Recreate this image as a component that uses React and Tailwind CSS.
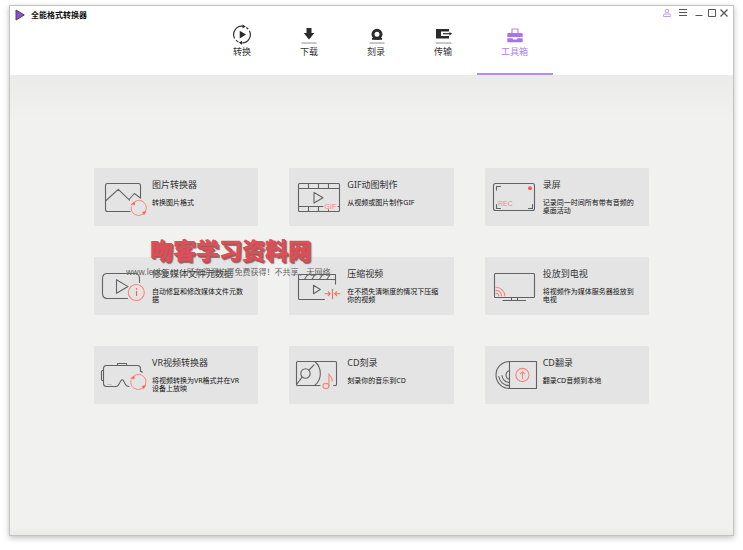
import { useState } from "react";

const INK = "#626264";
const RED = "#fb8579";

function IconBox({ children }) {
  return (
    <svg
      viewBox="0 0 58 58"
      className="h-[58px] w-[58px] shrink-0"
      fill="none"
      stroke={INK}
      strokeWidth="1.1"
      strokeLinecap="round"
      strokeLinejoin="round"
      aria-hidden="true"
    >
      {children}
    </svg>
  );
}

// Two half arcs with arrow heads, drawn round (cx, cy)
function Refresh({ cx, cy }) {
  return (
    <g transform={`translate(${cx} ${cy})`} stroke={RED} strokeWidth="1">
      <path d="M-7.4 -1.2A7.5 7.5 0 0 0 4 6.4" />
      <path d="M-3.5 -6.7A7.5 7.5 0 0 1 6.8 3.2" />
      <path d="M-7.4 -3.6L-4 -6.2L-4.2 -3.4Z" fill="#f8604f" stroke="#f8604f" strokeWidth="0.6" />
      <path d="M4 4.2L7.4 3.4L5.4 6.4Z" fill="#f8604f" stroke="#f8604f" strokeWidth="0.6" />
    </g>
  );
}

function PictureIcon() {
  return (
    <IconBox>
      <path d="M36 43.5H13.5Q11.5 43.5 11.5 41.5V17.5Q11.5 15.5 13.5 15.5H44.5Q46.5 15.5 46.5 17.5V30" />
      <path d="M11.5 33L24.3 21.3L35.5 32.2M35 31.5L40.3 25.5L46.5 30" />
      <Refresh cx={44.7} cy={40} />
    </IconBox>
  );
}

function GifIcon() {
  return (
    <IconBox>
      <path d="M34 43.5H10.5Q9.5 43.5 9.5 42.5V16.5Q9.5 15.5 10.5 15.5H49.5Q50.5 15.5 50.5 16.5V42.5Q50.5 43.5 49.5 43.5H34" />
      <path d="M9.5 20.5H50.5M9.5 38.5H34M49 38.5H50.5M19.5 15.5V20.5M29.5 15.5V20.5M39.5 15.5V20.5M19.5 38.5V43.5M29.5 38.5V43.5M39.5 41.8V43.5" />
      <path d="M25 24.5V35L34 29.7Z" />
      <text x="35.5" y="40.5" fontSize="7" fill={RED} stroke="none" className="font-['Liberation_Sans',sans-serif]">
        GIF
      </text>
    </IconBox>
  );
}

function RecordIcon() {
  return (
    <IconBox>
      <rect x="8.5" y="15.5" width="41" height="27" rx="2" />
      <path d="M11.5 22V18.5H15.5M11.5 36.5V40.5H15.5M47.5 36.5V40.5H43.5" />
      <circle cx="45" cy="20.3" r="2" fill="#fb5b4b" stroke="none" />
      <text x="13" y="38" fontSize="7" fill={RED} stroke="none" className="font-['Liberation_Sans',sans-serif]">
        REC
      </text>
    </IconBox>
  );
}

function RepairIcon() {
  return (
    <IconBox>
      <path d="M33.5 41.5H13.5Q8.5 41.5 8.5 36.5V21.5Q8.5 16.5 13.5 16.5H41Q45.5 16.5 45.5 21.5V25.5" />
      <path d="M22.5 22.7V36.3L34 29.6Z" />
      <circle cx="42.3" cy="35.5" r="8" stroke={RED} />
      <path d="M42.5 34.5V38.5" stroke="#fb5b4b" />
      <path d="M42.5 31.8V32" stroke="#fb5b4b" strokeWidth="1.4" />
    </IconBox>
  );
}

function CompressIcon() {
  return (
    <IconBox>
      <path d="M35.5 42.5H10.5Q9.5 42.5 9.5 41.5V17.5H46.5V27M9.5 22.5H46.5" />
      <path d="M15.5 22.3L18.5 17.7M23 22.3L26 17.7M30.5 22.3L33.5 17.7M38 22.3L41 17.7" />
      <path d="M24.5 28.3V36.7L31.3 32.5Z" />
      <g stroke="#fb6a5c">
        <path d="M43.5 32.3V41.7" />
        <path d="M36 36.7H41M39.3 34.8L41.2 36.7L39.3 38.6M51 36.7H46M47.7 34.8L45.8 36.7L47.7 38.6" />
      </g>
    </IconBox>
  );
}

function TvIcon() {
  return (
    <IconBox>
      <rect x="9.5" y="16.5" width="40" height="24" rx="1" />
      <path d="M26.5 40.5V43.5M32.5 40.5V43.5M18 43.5H40.5" />
      <path
        d="M11 36.2A3 3 0 0 1 13.8 39M11 33.4A5.6 5.6 0 0 1 16.6 39M11 30.2A8.8 8.8 0 0 1 19.8 39"
        stroke={RED}
      />
    </IconBox>
  );
}

function VrIcon() {
  return (
    <IconBox>
      <path d="M48 26.5V25.5H46.5V22.5Q46.5 19.5 43.5 19.5H12.5Q9.5 19.5 9.5 22.5V37.5Q9.5 40.5 12.5 40.5H22Q23.8 40.5 24.6 38.8L27 34.6Q28.2 33 29.4 34.6L31.6 38.8Q32.5 40.5 35 40.5" />
      <path d="M9.5 24.5H8.5Q7.5 24.5 7.5 25.5V33.5Q7.5 34.5 8.5 34.5H9.5M23.5 19.5V17.5H32.5V19.5" />
      <path d="M14 38.5H17" stroke="#bdbdbd" />
      <Refresh cx={44.3} cy={36} />
    </IconBox>
  );
}

function BurnIcon() {
  return (
    <IconBox>
      <path d="M31 39.5H8.5Q7.5 39.5 7.5 38.5V16.5Q7.5 15.5 8.5 15.5H46.5Q47.5 15.5 47.5 16.5V38.5Q47.5 39.5 46.5 39.5H44.5" />
      <circle cx="16.5" cy="27.5" r="4.7" />
      <path d="M25.7 15.5C33.2 21.5 33.2 33.5 25.7 39.5M20 24L25 18.8M13 31.2L8 38" />
      <g stroke={RED}>
        <ellipse cx="36.9" cy="40" rx="3" ry="2.6" />
        <path d="M39.9 40V27.5C40.2 30.5 44.5 31 43 35.3" />
      </g>
    </IconBox>
  );
}

function RipIcon() {
  return (
    <IconBox>
      <path d="M24.5 15.5H51.5V42.5H24.5ZM24.5 15.5A13.5 13.5 0 0 0 24.5 42.5" />
      <path d="M24.5 24.7A4.4 4.4 0 0 0 24.5 33.3M17 29.5A7.5 7.5 0 0 0 24.5 36.5M13.7 30.5A10.8 10.8 0 0 0 24.5 39.6" />
      <g stroke={RED}>
        <circle cx="37.4" cy="29" r="6.6" />
        <path d="M37.5 32.5V25.8M35.3 27.8L37.5 25.6L39.7 27.8" />
      </g>
    </IconBox>
  );
}

function NavSvg({ children }) {
  return (
    <svg viewBox="0 0 24 24" className="h-6 w-6" fill="none" aria-hidden="true">
      {children}
    </svg>
  );
}

function ConvertNav() {
  return (
    <NavSvg>
      <g stroke="#333" strokeWidth="1.2">
        <path d="M13 4.3A8.3 8.3 0 0 0 4.6 16.4M6 18.2A8.3 8.3 0 0 0 8.4 20" />
        <path d="M16.3 5.4A8.3 8.3 0 0 1 18.2 7M19.4 8.8A8.3 8.3 0 0 1 11 20.9" />
      </g>
      <path d="M12.5 2.4L15.8 4.5L12.6 6.2ZM12 18.8L8.8 20.8L12 22.8ZM9.7 8.8V16.4L16 12.6Z" fill="#2b2b2b" />
    </NavSvg>
  );
}

function DownloadNav() {
  return (
    <NavSvg>
      <path d="M9.5 6H14.5V11H17.3L12 17.4L6.7 11H9.5Z" fill="#2b2b2b" />
      <path d="M4.5 21H19.5" stroke="#a3a3a3" strokeWidth="1.2" />
    </NavSvg>
  );
}

function BurnNav() {
  return (
    <NavSvg>
      <circle cx="13" cy="12.3" r="4" stroke="#2b2b2b" strokeWidth="3" />
      <path d="M8 16H18V17.8H8Z" fill="#2b2b2b" />
      <path d="M5.5 21H20.5" stroke="#a3a3a3" strokeWidth="1.2" />
    </NavSvg>
  );
}

function TransferNav() {
  return (
    <NavSvg>
      <path d="M5 7H18V9.4H10V14H18V16.5H5Z" fill="#2b2b2b" />
      <path d="M12 11.7H20" stroke="#2b2b2b" strokeWidth="1.2" />
      <path d="M18.5 9.9L21.2 11.7L18.5 13.5Z" fill="#2b2b2b" />
      <path d="M4.5 21H20.5" stroke="#a3a3a3" strokeWidth="1.2" />
    </NavSvg>
  );
}

function ToolboxNav() {
  return (
    <NavSvg>
      <path d="M9 11V7H15V11" stroke="#b58af0" strokeWidth="1.2" />
      <path d="M5.3 11H18.7Q19.7 11 19.7 12V15H4.3V12Q4.3 11 5.3 11Z" fill="#a774ec" />
      <path d="M4.3 16.2H9.8V17.6H14.2V16.2H19.7V19.4Q19.7 20.2 18.9 20.2H5.1Q4.3 20.2 4.3 19.4Z" fill="#a774ec" />
    </NavSvg>
  );
}

const tabs = [
  { label: "转换", Icon: ConvertNav },
  { label: "下载", Icon: DownloadNav },
  { label: "刻录", Icon: BurnNav },
  { label: "传输", Icon: TransferNav },
  { label: "工具箱", Icon: ToolboxNav },
];

const tools = [
  { title: "图片转换器", text: "转换图片格式", Icon: PictureIcon },
  { title: "GIF动图制作", text: "从视频或图片制作GIF", Icon: GifIcon },
  { title: "录屏", text: "记录同一时间所有带有音频的桌面活动", Icon: RecordIcon },
  { title: "修复媒体文件元数据", text: "自动修复和修改媒体文件元数据", Icon: RepairIcon },
  { title: "压缩视频", text: "在不损失清晰度的情况下压缩你的视频", Icon: CompressIcon },
  { title: "投放到电视", text: "将视频作为媒体服务器投放到电视", Icon: TvIcon },
  { title: "VR视频转换器", text: "将视频转换为VR格式并在VR设备上放映", Icon: VrIcon },
  { title: "CD刻录", text: "刻录你的音乐到CD", Icon: BurnIcon },
  { title: "CD翻录", text: "翻录CD音频到本地", Icon: RipIcon },
];

function TitleBar() {
  return (
    <div className="flex h-4 items-start justify-between pr-1 pl-[5px]">
      <div className="flex items-center gap-[6px] pt-[3px]">
        <svg viewBox="0 0 10 12" className="h-3 w-[10px]" aria-hidden="true">
          <path d="M1 1L9.3 6L1 11Z" fill="#8a4fd6" stroke="#4b4453" strokeWidth="1" strokeLinejoin="round" />
        </svg>
        <h1 className="text-[8px] leading-[12px] font-bold text-[#111]">全能格式转换器</h1>
      </div>
      <div className="flex items-center gap-[2px] pt-[2px] text-[#555]">
        <div className="mr-[1px] flex items-center gap-[6px]">
          <button type="button" aria-label="账户">
            <svg viewBox="0 0 10 10" className="block h-[10px] w-[10px]" fill="none" stroke="#c09cf0">
              <circle cx="5" cy="3" r="1.8" />
              <path d="M1.5 8.5V7.2Q1.5 6 3 6H7Q8.5 6 8.5 7.2V8.5Z" />
            </svg>
          </button>
          <button type="button" aria-label="菜单">
            <svg viewBox="0 0 10 10" className="block h-[10px] w-[10px]" stroke="currentColor">
              <path d="M1 1.5H9M1 4.5H9M1 7.5H9" />
            </svg>
          </button>
          <button type="button" aria-label="最小化">
            <svg viewBox="0 0 10 10" className="block h-[10px] w-[10px]" stroke="currentColor">
              <path d="M1.5 7.5H8.5" />
            </svg>
          </button>
        </div>
        <button type="button" aria-label="最大化">
          <svg viewBox="0 0 10 10" className="block h-[10px] w-[10px]" fill="none" stroke="currentColor">
            <path d="M1.5 1.5H8.5V8.5H1.5Z" />
          </svg>
        </button>
        <button type="button" aria-label="关闭">
          <svg viewBox="0 0 10 10" className="block h-[10px] w-[10px]" stroke="currentColor" strokeWidth="1.3">
            <path d="M1.5 1.5L8.5 8.5M8.5 1.5L1.5 8.5" />
          </svg>
        </button>
      </div>
    </div>
  );
}

function ToolCard({ title, text, Icon }) {
  return (
    <button type="button" className="flex min-h-[58px] items-start rounded-[1px] bg-[#e4e4e4] text-left">
      <Icon />
      <span className="block flex-1 pt-[11px] pr-[14px]">
        <span className="block text-[9px] leading-[12px] whitespace-nowrap text-[#333]">{title}</span>
        <span className="mt-2 block text-[7px] leading-[8px] text-[#111]">{text}</span>
      </span>
    </button>
  );
}

export default function App() {
  const [active, setActive] = useState("工具箱");

  return (
    <div className="flex min-h-screen bg-white px-[9px] pt-[5px] pb-[14px] font-['Noto_Sans','Noto_Sans_CJK_SC',sans-serif]">
      <div className="flex flex-1 flex-col border border-[#c3c3c3] bg-white shadow-[0_2px_6px_rgba(0,0,0,0.25)]">
        <header>
          <TitleBar />
          <nav className="flex justify-center pl-[18px]">
            {tabs.map(({ label, Icon }) => (
              <button
                key={label}
                type="button"
                onClick={() => setActive(label)}
                className={`flex h-[53px] flex-col items-center border-b-2 ${
                  active === label
                    ? "w-[76px] border-[#b78af5] text-[#b083f0]"
                    : "w-[67px] border-transparent text-[#333]"
                }`}
              >
                <Icon />
                <span className="text-[9px] leading-[12px]">{label}</span>
              </button>
            ))}
          </nav>
        </header>

        <main className="flex-1 bg-[#f1f1ef] bg-linear-to-b from-[#ebebea] to-[#f1f1ef] to-10% px-[84px] pt-[93px] pb-10 shadow-[inset_0_-8px_6px_-6px_#e6e6e5]">
          <div className="relative grid grid-cols-3 gap-[31px]">
            {tools.map((tool) => (
              <ToolCard key={tool.title} {...tool} />
            ))}

            {/* Watermark laid over the cards */}
            <div className="pointer-events-none absolute top-[65px] left-[32px] whitespace-nowrap">
              <p className="ml-[24px] text-[23px] leading-[34px] font-black text-[#dc4f58] [text-shadow:1px_1px_0_#a8545a,2px_2px_1px_#8a6a6c]">
                吻客学习资料网
              </p>
              <p className="text-[8px] leading-[10px] text-[#666]">
                www.leoba.cn：所有资源均可免费获得！不共享、无网络
              </p>
            </div>
          </div>
        </main>
      </div>
    </div>
  );
}
